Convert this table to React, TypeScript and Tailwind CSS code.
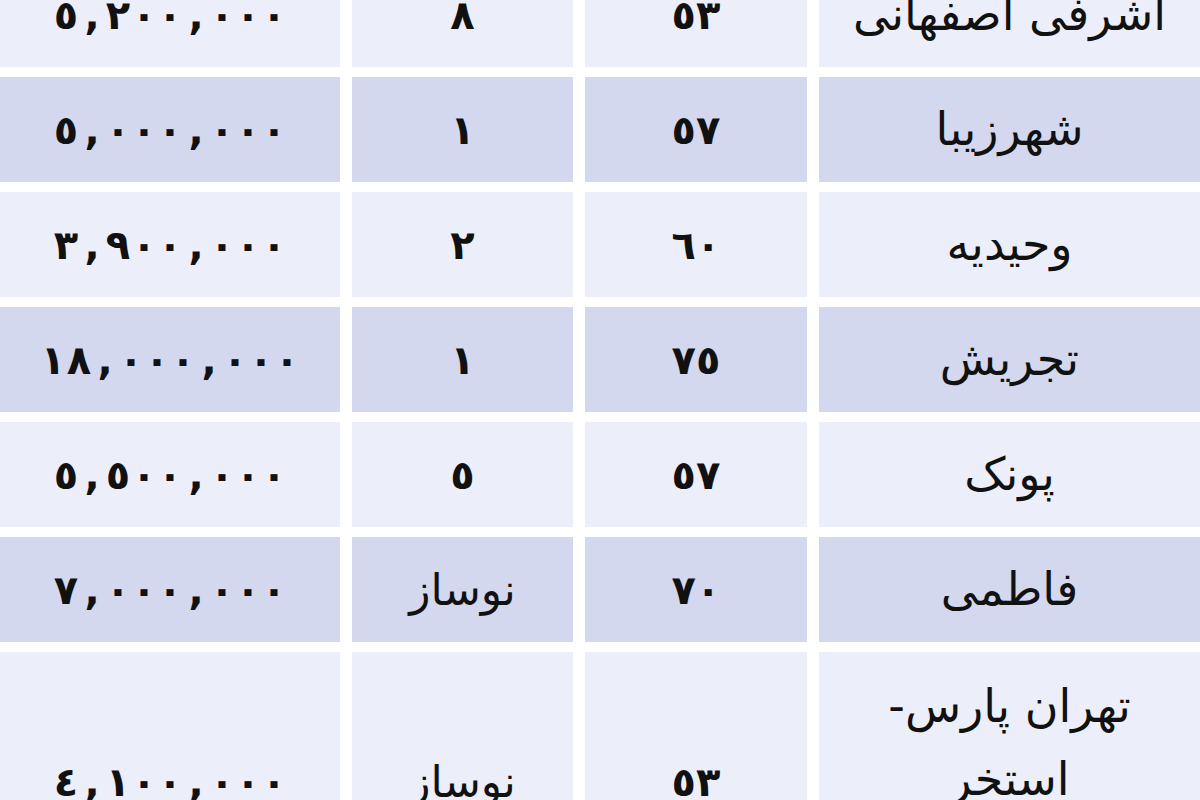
import React from "react";

const rows: { name: string[]; area: string; age: string; price: string; dark: boolean; tall?: boolean }[] = [
  { name: ["اشرفی اصفهانی"], area: "٥٣", age: "٨", price: "٥,٢٠٠,٠٠٠", dark: false },
  { name: ["شهرزیبا"], area: "٥٧", age: "١", price: "٥,٠٠٠,٠٠٠", dark: true },
  { name: ["وحیدیه"], area: "٦٠", age: "٢", price: "٣,٩٠٠,٠٠٠", dark: false },
  { name: ["تجریش"], area: "٧٥", age: "١", price: "١٨,٠٠٠,٠٠٠", dark: true },
  { name: ["پونک"], area: "٥٧", age: "٥", price: "٥,٥٠٠,٠٠٠", dark: false },
  { name: ["فاطمی"], area: "٧٠", age: "نوساز", price: "٧,٠٠٠,٠٠٠", dark: true },
  { name: ["تهران پارس-", "استخر"], area: "٥٣", age: "نوساز", price: "٤,١٠٠,٠٠٠", dark: false, tall: true },
];

function Spaced({ text }: { text: string }) {
  return (
    <span className="flex" dir="ltr">
      {Array.from(text).map((c, k) => (
        <span key={k} className="w-[26px] text-center">
          {c}
        </span>
      ))}
    </span>
  );
}

export default function App() {
  return (
    <div className="w-[1200px] h-[800px] overflow-hidden bg-white text-[#111]" style={{ fontFamily: '"DejaVu Sans", sans-serif' }}>
      <div className="flex flex-col gap-[10px] mt-[-38px]">
        {rows.map((r, i) => {
          const bg = r.dark ? "bg-[#d3d8ee]" : "bg-[#eceef9]";
          const h = r.tall ? "h-[260px]" : "h-[105px]";
          const ageIsWord = r.age === "نوساز";
          return (
            <div key={i} dir="rtl" className={`flex gap-[12px] ${h}`}>
              <div className={`w-[381px] ${bg} flex flex-col ${r.tall ? "justify-start pt-[18px]" : "justify-center"} items-center text-[46px] font-normal leading-[73px] text-center`}>
                {r.name.map((n, j) => (
                  <span key={j}>{n}</span>
                ))}
              </div>
              <div className={`w-[222px] ${bg} flex items-center justify-center text-[40px] font-bold`}>{r.area}</div>
              <div className={`w-[221px] ${bg} flex items-center justify-center ${ageIsWord ? "text-[44px] font-normal" : "text-[40px] font-bold"}`}>{r.age}</div>
              <div className={`w-[340px] ${bg} flex items-center justify-center text-[40px] font-bold`}>
                <Spaced text={r.price} />
              </div>
            </div>
          );
        })}
      </div>
    </div>
  );
}
